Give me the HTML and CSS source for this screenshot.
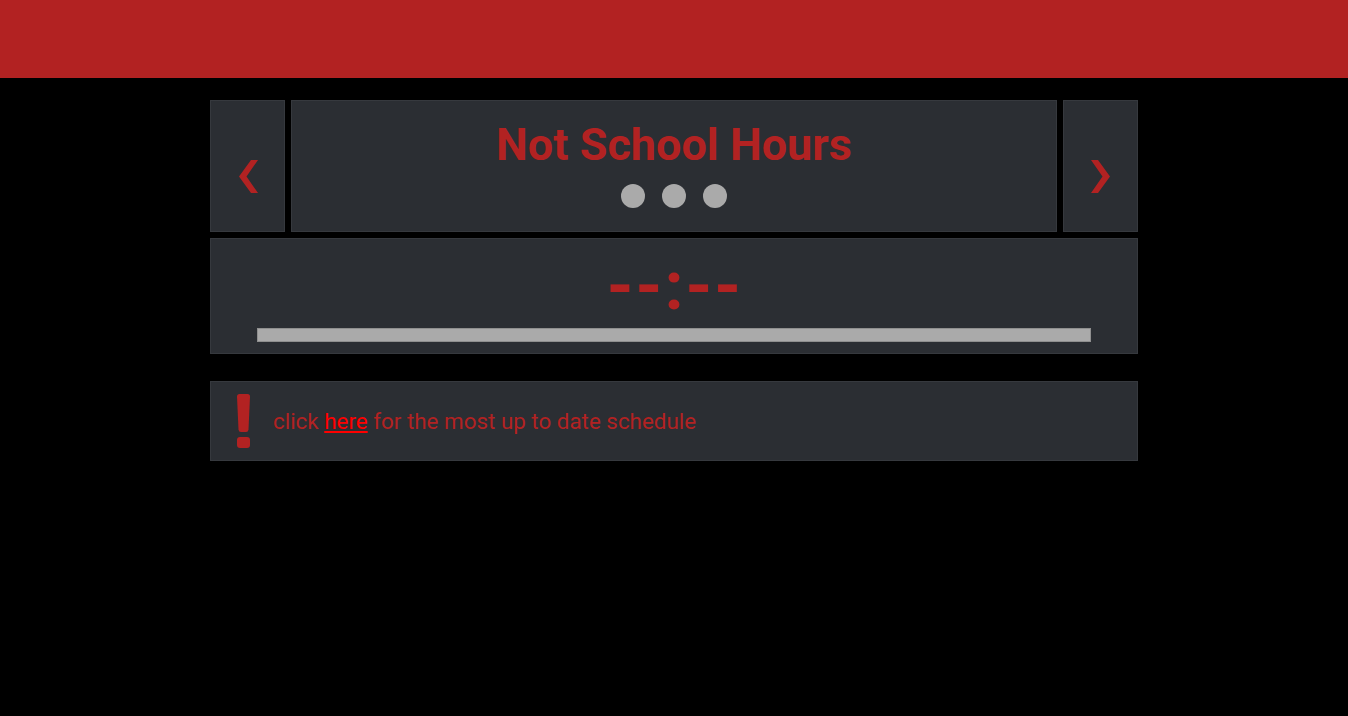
FILE: index.html
```html
<!DOCTYPE html>
<html lang="en">
<head>
<meta charset="utf-8">
<title>Not School Hours</title>
<link rel="stylesheet" href="styles.css">
</head>
<body>
<header class="topbar"></header>
<main class="wrap">
  <section class="status-row">
    <button class="nav-btn nav-prev" aria-label="Previous">
      <svg width="19" height="33" viewBox="0 0 19 33"><path d="M19 0 L12 0 L0 16.5 L12 33 L19 33 L7.5 16.5 Z" fill="#b22222"/></svg>
    </button>
    <div class="status-main">
      <h1 class="status-title">Not School Hours</h1>
      <div class="dots"><span class="dot"></span><span class="dot"></span><span class="dot"></span></div>
    </div>
    <button class="nav-btn nav-next" aria-label="Next">
      <svg width="19" height="33" viewBox="0 0 19 33"><path d="M0 0 L7 0 L19 16.5 L7 33 L0 33 L11.5 16.5 Z" fill="#b22222"/></svg>
    </button>
  </section>
  <section class="clock-box">
    <div class="clock">--:--</div>
    <div class="progress"></div>
  </section>
  <section class="notice">
    <svg class="alert" width="13" height="54" viewBox="0 0 13 54"><path d="M2.5 0 H10.5 Q13 0 13 2.5 L11.5 35.5 Q11.3 38 9 38 H4 Q1.7 38 1.5 35.5 L0 2.5 Q0 0 2.5 0 Z" fill="#b22222"/><rect x="0" y="43" width="13" height="11" rx="3" fill="#b22222"/></svg>
    <p class="notice-text">click <a href="#" class="notice-link">here</a> for the most up to date schedule</p>
  </section>
</main>
</body>
</html>
```
FILE: styles.css
```css
* { box-sizing: border-box; }
html, body { margin: 0; padding: 0; background: #000; }
body { font-family: Roboto, "Liberation Sans", sans-serif; height: 716px; overflow: hidden; }
.topbar { height: 78px; background: #b22222; }
.wrap { width: 928px; margin: 22px auto 0; }
.status-row { display: flex; gap: 6px; height: 132px; }
.nav-btn {
  width: 75px; flex: none; margin: 0; padding: 20px 0 0; font: inherit;
  background: #2b2e33; border: 1px solid #36393e; cursor: pointer;
  display: flex; align-items: center; justify-content: center;
}
.nav-prev svg { margin-left: 2px; }
.status-main {
  flex: 1; background: #2b2e33; border: 1px solid #36393e;
  display: flex; flex-direction: column; align-items: center; padding-top: 18px;
}
.status-title { margin: 0; font-size: 45px; line-height: 52px; font-weight: 700; color: #b22222; }
.dots { display: flex; gap: 17px; margin-top: 13px; }
.dot { width: 24px; height: 24px; border-radius: 50%; background: #aaaaaa; }
.clock-box {
  margin-top: 6px; height: 116px; background: #2b2e33; border: 1px solid #36393e;
  padding: 10px 46px 0; display: flex; flex-direction: column; align-items: center;
}
.clock { font-size: 68px; line-height: 74px; height: 72px; font-weight: 700; color: #b22222; letter-spacing: 2px; margin-right: -2px; }
.progress { align-self: stretch; height: 14px; margin-top: 7px; background: #aaaaaa; border: 1px solid #8f8f8f; }
.notice {
  margin-top: 27px; height: 80px; background: #2b2e33; border: 1px solid #36393e;
  display: flex; align-items: center; padding-left: 26px; gap: 23px;
}
.alert { flex: none; }
.notice-text { margin: 0; font-size: 22.4px; color: #b22222; }
.notice-link { color: #ff0000; text-decoration: underline; }
```
